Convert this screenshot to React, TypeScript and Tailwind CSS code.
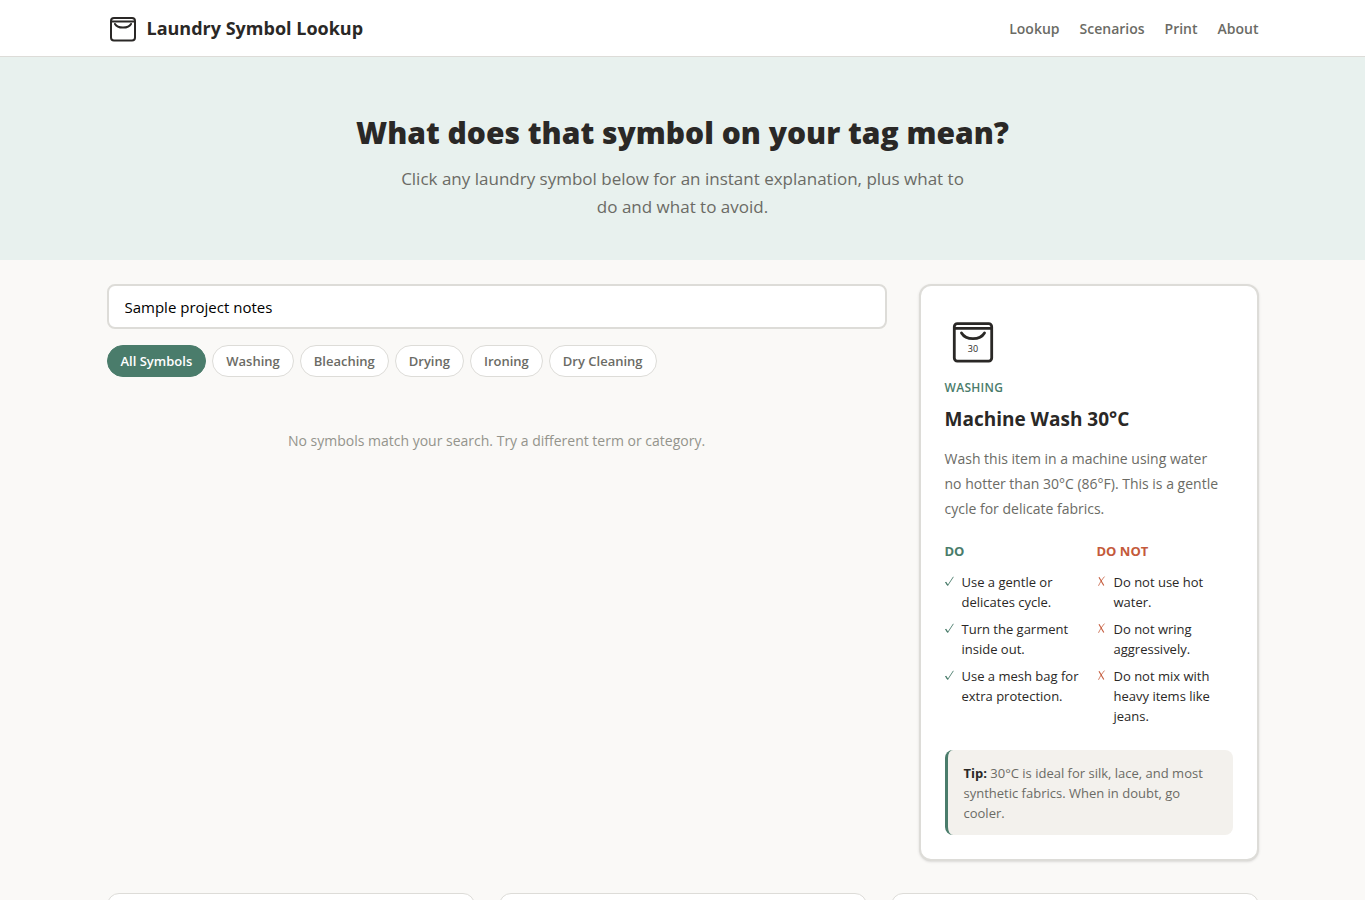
import { useState } from 'react';
import clsx from 'clsx';

const navLinks = ['Lookup', 'Scenarios', 'Print', 'About'];

const categories = ['All Symbols', 'Washing', 'Bleaching', 'Drying', 'Ironing', 'Dry Cleaning'];

const dos = [
  'Use a gentle or delicates cycle.',
  'Turn the garment inside out.',
  'Use a mesh bag for extra protection.',
];

const donts = [
  'Do not use hot water.',
  'Do not wring aggressively.',
  'Do not mix with heavy items like jeans.',
];

function LogoIcon() {
  return (
    <svg width="32" height="32" viewBox="0 0 32 32" fill="none" stroke="currentColor" strokeWidth="2" aria-hidden="true">
      <rect x="4" y="6" width="24" height="22.500" rx="3" />
      <path d="M4 9.500h24" />
      <path d="M8 12c2.500 4.800 13.500 4.800 16 0" strokeLinecap="round" />
    </svg>
  );
}

function WashIcon({ label }: { label: string }) {
  return (
    <svg width="56" height="56" viewBox="0 0 56 56" fill="none" stroke="currentColor" strokeWidth="2.8" aria-hidden="true">
      <rect x="9.300" y="9.700" width="37.400" height="37.400" rx="3" />
      <path d="M9.300 14.300h37.400" />
      <path d="M16.500 19c4.500 7.500 18.500 7.500 23 0" strokeLinecap="round" />
      <text x="28" y="38" textAnchor="middle" fontSize="9" fill="currentColor" stroke="none">
        {label}
      </text>
    </svg>
  );
}

function CheckMark() {
  return (
    <svg className="mt-1 shrink-0 text-[#4a7c6b]" width="9" height="11" viewBox="0 0 9 11" fill="none" stroke="currentColor" aria-hidden="true">
      <path d="M0.600 6.200 2.800 9.300 8.400 0.800" strokeWidth="0.9" />
      <path d="M0.600 6.200 2.800 9.300" strokeWidth="1.2" />
    </svg>
  );
}

function CrossMark() {
  return (
    <svg className="mt-1 shrink-0 text-[#c45a3b]" width="9" height="11" viewBox="0 0 9 11" fill="none" stroke="currentColor" aria-hidden="true">
      <path d="M2 1.200 6.800 9.600" strokeWidth="1.1" />
      <path d="M7.500 0.600C5 3.500 3 6.500 1.500 9.800" strokeWidth="0.8" />
    </svg>
  );
}

export default function App() {
  const [query, setQuery] = useState('Sample project notes');
  const [active, setActive] = useState('All Symbols');

  return (
    <div className="min-h-screen bg-[#faf9f7] font-['Open_Sans','Noto_Sans',sans-serif] text-[#2a2826]">
      <header className="border-b border-[#dddcd8] bg-white">
        <div className="mx-auto flex h-14 max-w-[1200px] items-center justify-between px-6">
          <a href="#" className="flex items-center gap-2 text-[18px] font-bold">
            <LogoIcon />
            Laundry Symbol Lookup
          </a>
          <nav className="flex gap-5 text-[14px] font-semibold text-[#6b6b65]">
            {navLinks.map((link) => (
              <a key={link} href="#">
                {link}
              </a>
            ))}
          </nav>
        </div>
      </header>

      <section className="bg-[#e8f1ee] px-6 pt-14 pb-[39px] text-center">
        <h1 className="text-[30px] leading-10 font-extrabold">What does that symbol on your tag mean?</h1>
        <p className="mx-auto mt-3 max-w-[580px] text-[17px] leading-7 text-[#6b6b65]">
          Click any laundry symbol below for an instant explanation, plus what to do and what to avoid.
        </p>
      </section>

      <main className="mx-auto max-w-[1200px] px-6 pt-6 pb-8">
        <div className="grid grid-cols-[1fr_340px] items-start gap-8">
          <div>
            <input
              type="text"
              aria-label="Search symbols"
              value={query}
              onChange={(e) => setQuery(e.target.value)}
              className="block h-[45px] w-full rounded-lg border-2 border-[#dddcd8] bg-white px-4 text-[15px] text-black outline-none"
            />
            <div className="mt-4 flex flex-wrap gap-[6px]">
              {categories.map((c) => (
                <button
                  key={c}
                  type="button"
                  onClick={() => setActive(c)}
                  className={clsx(
                    'h-8 rounded-full border px-[13px] pt-[2px] text-[13px] font-semibold',
                    c === active
                      ? 'border-[#4a7c6b] bg-[#4a7c6b] text-white'
                      : 'border-[#dddcd8] bg-white text-[#6b6b65]',
                  )}
                >
                  {c}
                </button>
              ))}
            </div>
            <p className="py-[54px] text-center text-[14px] leading-5 text-[#94948c]">
              No symbols match your search. Try a different term or category.
            </p>
          </div>

          <aside className="rounded-xl border-2 border-[#dddcd8] bg-white px-6 pt-7 pb-6 shadow-sm">
            <WashIcon label="30" />
            <p className="mt-[9px] text-[12px] leading-[18px] font-semibold tracking-wide text-[#4a7c6b] uppercase">Washing</p>
            <h2 className="mt-2 text-[19px] leading-7 font-bold">Machine Wash 30°C</h2>
            <p className="mt-[13px] pr-2 text-[14px] leading-[25px] text-[#6b6b65]">
              Wash this item in a machine using water no hotter than 30°C (86°F). This is a gentle cycle for delicate
              fabrics.
            </p>

            <div className="mt-5 grid grid-cols-2 gap-4">
              <div>
                <h3 className="text-[13px] leading-5 font-bold text-[#4a7c6b]">DO</h3>
                <ul className="mt-[11px] space-y-[7px] text-[13px] leading-5">
                  {dos.map((d) => (
                    <li key={d} className="flex gap-2">
                      <CheckMark />
                      <span>{d}</span>
                    </li>
                  ))}
                </ul>
              </div>
              <div>
                <h3 className="text-[13px] leading-5 font-bold text-[#c45a3b]">DO NOT</h3>
                <ul className="mt-[11px] space-y-[7px] text-[13px] leading-5">
                  {donts.map((d) => (
                    <li key={d} className="flex gap-2">
                      <CrossMark />
                      <span>{d}</span>
                    </li>
                  ))}
                </ul>
              </div>
            </div>

            <p className="mt-6 rounded-lg border-l-3 border-[#4a7c6b] bg-[#f3f1ed] px-4 pt-[13px] pb-3 text-[13px] leading-5 text-[#6b6b65]">
              <strong className="font-bold text-[#2a2826]">Tip:</strong> 30°C is ideal for silk, lace, and most
              synthetic fabrics. When in doubt, go cooler.
            </p>
          </aside>
        </div>

        {/* Info cards */}
        <div className="mt-8 grid grid-cols-3 gap-6">
          <div className="h-40 rounded-xl border border-[#dddcd8] bg-white" />
          <div className="h-40 rounded-xl border border-[#dddcd8] bg-white" />
          <div className="h-40 rounded-xl border border-[#dddcd8] bg-white" />
        </div>
      </main>
    </div>
  );
}
